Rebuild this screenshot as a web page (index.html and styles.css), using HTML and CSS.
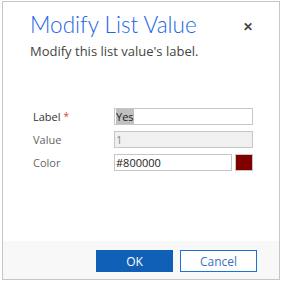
FILE: index.html
```html
<!DOCTYPE html>
<html lang="en">
<head>
    <meta charset="UTF-8">
    <title>Modify List Value</title>
    <link rel="stylesheet" href="styles.css">
</head>
<body>
<div class="dialog">
    <div class="dialog-header">
        <h1 class="dialog-title">Modify List Value</h1>
        <span class="close-btn">&#x2715;</span>
        <p class="dialog-subtitle">Modify this list value's label.</p>
    </div>

    <div class="dialog-body">
        <div class="row">
            <label class="field-label">Label <span class="required">*</span></label>
            <div class="field"><span class="input"><span class="selected">Yes</span></span></div>
        </div>
        <div class="row">
            <label class="field-label light">Value</label>
            <div class="field"><span class="input disabled">1</span></div>
        </div>
        <div class="row">
            <label class="field-label light">Color</label>
            <div class="field">
                <span class="input color-input">#800000</span>
                <span class="swatch"></span>
            </div>
        </div>
    </div>

    <div class="dialog-footer">
        <button class="btn btn-primary">OK</button>
        <button class="btn btn-secondary">Cancel</button>
    </div>
</div>
</body>
</html>
```

FILE: styles.css
```css
body {
    margin: 0;
    background: #fff;
    font-family: "Segoe UI", "Open Sans", "Noto Sans", sans-serif;
}

.dialog {
    margin: 1px 0 0 2px;
    width: 276px;
    height: 277px;
    border: 1px solid #c6c6c6;
    display: flex;
    flex-direction: column;
}

.dialog-header {
    position: relative;
    padding: 8px 0 0 27px;
}

.dialog-title {
    margin: 0;
    font-family: "Segoe UI Light", Lato, sans-serif;
    font-size: 22.5px;
    font-weight: 300;
    color: #2266e3;
    line-height: 30px;
}

.close-btn {
    position: absolute;
    top: 16px;
    right: 26px;
    font-size: 12px;
    font-weight: bold;
    color: #444;
}

.dialog-subtitle {
    margin: 2px 0 0 0;
    font-size: 13px;
    color: #444;
    line-height: 18px;
}

.dialog-body {
    flex: 1;
    padding: 48px 26px 0 30px;
}

.row {
    display: flex;
    align-items: center;
    margin-bottom: 6px;
}

.field-label {
    width: 81px;
    font-size: 11px;
    color: #333;
}

.field-label.light {
    color: #666;
}

.required {
    color: #e03b3b;
    vertical-align: top;
    font-size: 10px;
}

.field {
    flex: 1;
    display: flex;
    gap: 3px;
}

.input {
    flex: 1;
    height: 15px;
    border: 1px solid #c6c6c6;
    font-size: 11px;
    line-height: 15px;
    color: #222;
    padding: 0 1px;
}

.selected {
    background: #c0c0c0;
}

.input.disabled {
    background: #f0f0f0;
    color: #888;
}

.swatch {
    width: 16px;
    height: 15px;
    border: 1px solid #c6c6c6;
    background: #800000;
}

.dialog-footer {
    background: #f8f8f8;
    height: 38px;
    display: flex;
    justify-content: flex-end;
    align-items: flex-start;
    gap: 7px;
    padding: 9px 22px 0 0;
    box-sizing: border-box;
}

.btn {
    width: 77px;
    height: 22px;
    font-family: inherit;
    font-size: 12px;
    padding: 0;
    cursor: pointer;
}

.btn-primary {
    background: #1160b7;
    border: 1px solid #1160b7;
    color: #fff;
}

.btn-secondary {
    background: #fff;
    border: 1px solid #1a74d0;
    color: #3b6fc0;
}
```
